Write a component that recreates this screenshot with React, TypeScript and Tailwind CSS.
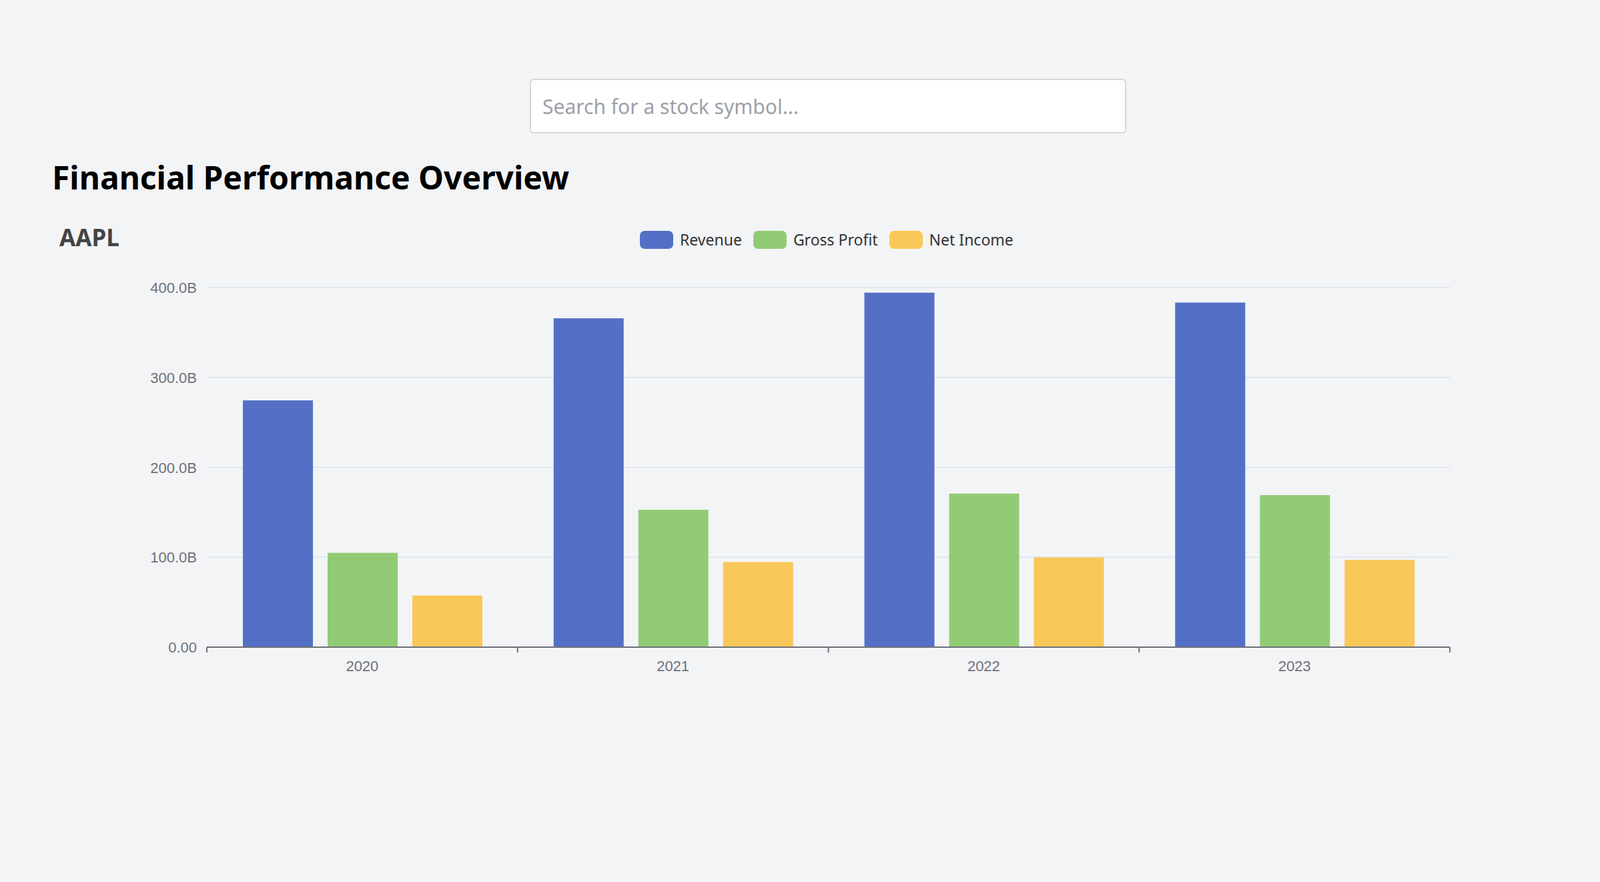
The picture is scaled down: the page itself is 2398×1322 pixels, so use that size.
const years = ['2020', '2021', '2022', '2023']
const data = [
  [274.5, 104.9, 57.4],
  [365.8, 152.8, 94.7],
  [394.3, 170.8, 99.8],
  [383.3, 169.1, 97.0],
]
const colors = ['#5470c6', '#91cc75', '#fac858']
const legend = ['Revenue', 'Gross Profit', 'Net Income']

// chart geometry (svg coords; svg top at page y=400)
const x0 = 310
const x1 = 2173
const yZero = 589
const yTop = 50
const per100 = (yZero - yTop) / 4
const groupW = (x1 - x0) / 4

function Chart() {
  return (
    <svg width="2398" height="660" className="block">
      {[1, 2, 3, 4].map((i) => (
        <line key={i} x1={x0} x2={x1} y1={yZero - i * per100} y2={yZero - i * per100} stroke="#e0e6f1" strokeWidth="2" />
      ))}
      {['0.00', '100.0B', '200.0B', '300.0B', '400.0B'].map((t, i) => (
        <text key={t} x={295} y={yZero - i * per100 + 8} textAnchor="end" fontSize="22" fill="#6e7079" fontFamily="Liberation Sans, Arial, sans-serif">
          {t}
        </text>
      ))}
      {data.map((g, gi) =>
        g.map((v, bi) => {
          const h = (v / 100) * per100
          return (
            <rect key={gi + '-' + bi} x={x0 + gi * groupW + 54 + bi * 127} y={yZero - h} width={105} height={h} fill={colors[bi]} />
          )
        }),
      )}
      <line x1={x0} x2={x1} y1={yZero} y2={yZero} stroke="#6e7079" strokeWidth="2" />
      {[0, 1, 2, 3, 4].map((i) => (
        <line key={i} x1={x0 + i * groupW} x2={x0 + i * groupW} y1={yZero} y2={yZero + 8} stroke="#6e7079" strokeWidth="2" />
      ))}
      {years.map((y, i) => (
        <text key={y} x={x0 + i * groupW + groupW / 2} y={625} textAnchor="middle" fontSize="22" fill="#6e7079" fontFamily="Liberation Sans, Arial, sans-serif">
          {y}
        </text>
      ))}
    </svg>
  )
}

export default function App() {
  return (
    <div className="min-h-screen bg-[#f3f4f6] font-['Liberation_Sans',Arial,sans-serif]">
      <div className="pt-[118px] pl-[794px]">
        <input
          placeholder="Search for a stock symbol..."
          className="w-[894px] h-[82px] bg-white border-2 border-[#d4d6da] rounded-md px-[17px] text-[30px] placeholder-[#9ca0a8] outline-none"
        />
      </div>
      <h1 className="mt-[38px] ml-[78px] text-[48px] leading-[56px] font-bold text-black">Financial Performance Overview</h1>
      <div className="relative mt-[37px] h-[50px] flex items-center">
        <span className="ml-[89px] text-[35px] font-bold text-[#444]">AAPL</span>
        <div className="absolute left-[959px] top-[11px] flex items-center gap-[17px]">
          {legend.map((l, i) => (
            <div key={l} className="flex items-center gap-[10px]">
              <span className="w-[50px] h-[27px] rounded-[7px]" style={{ background: colors[i] }} />
              <span className="text-[23px] text-[#333]">{l}</span>
            </div>
          ))}
        </div>
      </div>
      <Chart />
    </div>
  )
}
